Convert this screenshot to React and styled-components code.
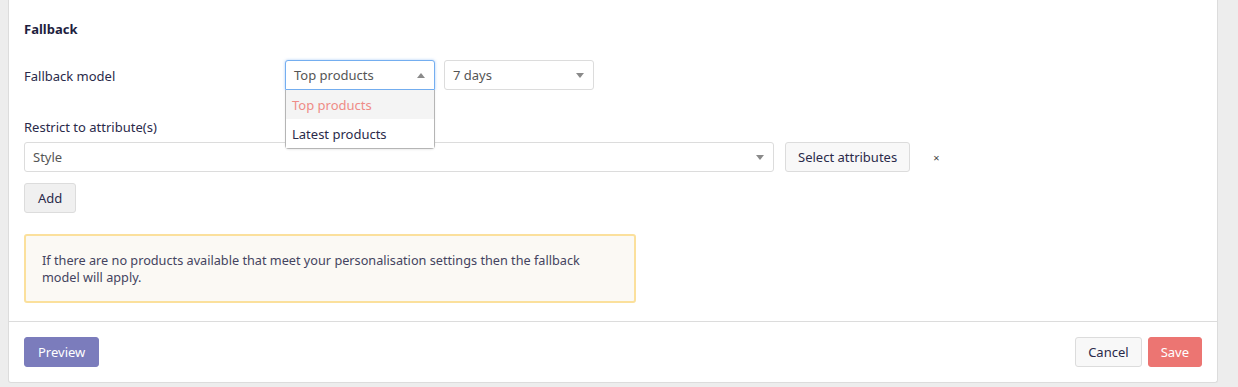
import React from "react";
import styled, { createGlobalStyle } from "styled-components";

const GlobalStyle = createGlobalStyle`
  html, body {
    margin: 0;
    padding: 0;
    background: #ededed;
    font-family: "Noto Sans", "Open Sans", sans-serif;
    color: #2a2a4a;
  }
  * { box-sizing: border-box; }
`;

function Caret({ up }) {
  return (
    <CaretIcon width="8" height="5" viewBox="0 0 8 5">
      {up ? <path d="M0 5 L4 0 L8 5 Z" /> : <path d="M0 0 L8 0 L4 5 Z" />}
    </CaretIcon>
  );
}

function App() {
  return (
    <Page>
      <GlobalStyle />
      <Card>
        <Body>
          <Heading>Fallback</Heading>
          <ModelRow>
            <Label>Fallback model</Label>
            <SelectWrap>
              <Select focused>
                <span>Top products</span>
                <Caret up />
              </Select>
              <Menu>
                <MenuItem active>Top products</MenuItem>
                <MenuItem>Latest products</MenuItem>
              </Menu>
            </SelectWrap>
            <Select>
              <span>7 days</span>
              <Caret />
            </Select>
          </ModelRow>

          <FieldLabel>Restrict to attribute(s)</FieldLabel>
          <AttrRow>
            <Select wide>
              <span>Style</span>
              <Caret />
            </Select>
            <Button>Select attributes</Button>
            <Remove>×</Remove>
          </AttrRow>
          <Button small>Add</Button>

          <Callout>
            If there are no products available that meet your personalisation settings then the fallback
            model will apply.
          </Callout>
        </Body>
        <Footer>
          <Button variant="primary">Preview</Button>
          <FooterRight>
            <Button>Cancel</Button>
            <Button variant="danger">Save</Button>
          </FooterRight>
        </Footer>
      </Card>
    </Page>
  );
}

export default App;

const Page = styled.div`
  width: 1238px;
  height: 387px;
  padding-left: 8px;
  overflow: hidden;
`;

const Card = styled.div`
  width: 1210px;
  background: #fff;
  border: 1px solid #dcdcdc;
  border-top: none;
  border-radius: 0 0 3px 3px;
`;

const Body = styled.div`
  padding: 20px 15px 18px 15px;
`;

const Heading = styled.h3`
  margin: 0 0 22px;
  font-size: 13px;
  line-height: 18px;
  font-weight: 700;
  color: #1e1e40;
`;

const ModelRow = styled.div`
  display: flex;
  align-items: center;
  gap: 9px;
`;

const Label = styled.div`
  width: 252px;
  font-size: 13px;
  line-height: 18px;
  padding-top: 2px;
`;

const FieldLabel = styled.div`
  margin: 28px 0 6px;
  font-size: 13px;
  line-height: 18px;
`;

const SelectWrap = styled.div`
  position: relative;
`;

const Select = styled.div`
  display: flex;
  align-items: center;
  justify-content: space-between;
  width: ${(p) => (p.wide ? "750px" : "150px")};
  height: 30px;
  padding: 0 9px 0 8px;
  background: #fff;
  border: 1px solid ${(p) => (p.focused ? "#74aef0" : "#dcdcdc")};
  border-radius: ${(p) => (p.focused ? "3px 3px 0 0" : "3px")};
  box-shadow: ${(p) => (p.focused ? "0 0 3px rgba(116, 174, 240, 0.6)" : "none")};
  font-size: 13px;
  color: #555;
`;

const CaretIcon = styled.svg`
  fill: #8a8a8a;
  flex-shrink: 0;
`;

const Menu = styled.div`
  position: absolute;
  top: 30px;
  left: 0;
  width: 150px;
  background: #fff;
  border: 1px solid #b5b5b5;
  border-top: none;
  border-radius: 0 0 4px 4px;
  box-shadow: 0 1px 2px rgba(0, 0, 0, 0.08);
  z-index: 2;
`;

const MenuItem = styled.div`
  height: 29px;
  display: flex;
  align-items: center;
  padding: 0 6px;
  font-size: 13px;
  background: ${(p) => (p.active ? "#f4f4f4" : "#fff")};
  color: ${(p) => (p.active ? "#ef8b86" : "#2a2a4a")};
`;

const AttrRow = styled.div`
  display: flex;
  align-items: center;
  gap: 11px;
  margin-bottom: 11px;
`;

const Remove = styled.span`
  margin-left: 12px;
  font-size: 11px;
  color: #444;
`;

const Button = styled.button`
  height: 30px;
  padding: 0 ${(p) => (p.small || p.variant === "primary" ? "13px" : "12px")};
  font-family: inherit;
  font-size: 13px;
  border-radius: 3px;
  cursor: pointer;
  border: 1px solid
    ${(p) =>
      p.variant === "primary" ? "#7b7cbc" : p.variant === "danger" ? "#ec7572" : "#dcdcdc"};
  background: ${(p) =>
    p.variant === "primary" ? "#7b7cbc" : p.variant === "danger" ? "#ec7572" : p.small ? "#f0f0f0" : "#f8f8f8"};
  color: ${(p) => (p.variant ? "#fff" : "#2a2a4a")};
`;

const Callout = styled.div`
  margin-top: 21px;
  width: 612px;
  padding: 16px 16px 15px;
  border: 2px solid #fbe09c;
  border-radius: 3px;
  background: #fbf9f4;
  font-size: 12.7px;
  line-height: 17px;
  color: #444460;
`;

const Footer = styled.div`
  display: flex;
  align-items: center;
  justify-content: space-between;
  padding: 15px 15px 15px 15px;
  border-top: 1px solid #dcdcdc;
`;

const FooterRight = styled.div`
  display: flex;
  gap: 6px;
`;
